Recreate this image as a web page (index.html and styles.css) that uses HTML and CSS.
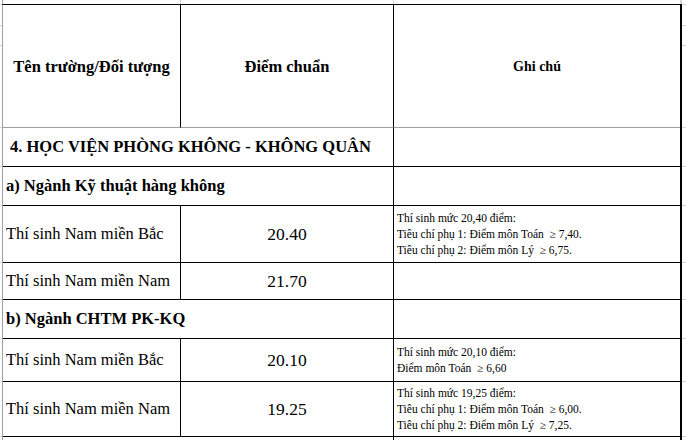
FILE: index.html
```html
<!DOCTYPE html>
<html lang="vi">
<head>
<meta charset="utf-8">
<title>Điểm chuẩn</title>
<link rel="stylesheet" href="styles.css">
</head>
<body>
<div class="sheet">
  <div class="gutter gutter-left">
    <div class="tick h5"></div><div class="tick h21"></div><div class="tick h20"></div><div class="tick h82"></div>
    <div class="tick h39"></div><div class="tick h39"></div><div class="tick h57"></div><div class="tick h37"></div>
    <div class="tick h39"></div><div class="tick h43"></div><div class="tick h55"></div>
  </div>
  <div class="main">
    <div class="topstrip"><div class="strip-cell"></div><div class="strip-cell"></div><div class="strip-cell last"></div></div>
    <div class="grid">
      <div class="cell head">Tên trường/Đối tượng</div>
      <div class="cell head">Điểm chuẩn</div>
      <div class="cell head small last">Ghi chú</div>

      <div class="cell bold span2 indent">4. HỌC VIỆN PHÒNG KHÔNG - KHÔNG QUÂN</div>
      <div class="cell last"></div>

      <div class="cell bold span2">a) Ngành Kỹ thuật hàng không</div>
      <div class="cell last"></div>

      <div class="cell">Thí sinh Nam miền Bắc</div>
      <div class="cell num">20.40</div>
      <div class="cell note last"><span>Thí sinh mức 20,40 điểm:</span><span>Tiêu chí phụ 1: Điểm môn Toán &nbsp;≥ 7,40.</span><span>Tiêu chí phụ 2: Điểm môn Lý &nbsp;≥ 6,75.</span></div>

      <div class="cell">Thí sinh Nam miền Nam</div>
      <div class="cell num">21.70</div>
      <div class="cell last"></div>

      <div class="cell bold span2">b) Ngành CHTM PK-KQ</div>
      <div class="cell last"></div>

      <div class="cell">Thí sinh Nam miền Bắc</div>
      <div class="cell num">20.10</div>
      <div class="cell note last"><span>Thí sinh mức 20,10 điểm:</span><span>Điểm môn Toán &nbsp;≥ 6,60</span></div>

      <div class="cell">Thí sinh Nam miền Nam</div>
      <div class="cell num">19.25</div>
      <div class="cell note last"><span>Thí sinh mức 19,25 điểm:</span><span>Tiêu chí phụ 1: Điểm môn Toán &nbsp;≥ 6,00.</span><span>Tiêu chí phụ 2: Điểm môn Lý &nbsp;≥ 7,25.</span></div>

      <div class="cell span2 open"></div>
      <div class="cell last open"></div>
    </div>
  </div>
  <div class="gutter gutter-right">
    <div class="tick h5"></div><div class="tick h21"></div><div class="tick h20"></div><div class="tick h82"></div>
    <div class="tick h39"></div><div class="tick h39"></div><div class="tick h57"></div><div class="tick h37"></div>
    <div class="tick h39"></div><div class="tick h43"></div><div class="tick h55"></div>
  </div>
</div>
</body>
</html>
```
FILE: styles.css
```css
html, body {
  margin: 0;
  padding: 0;
  background: #ffffff;
}
body {
  font-family: "Liberation Serif", "Times New Roman", serif;
  color: #000000;
}
.sheet {
  display: flex;
  align-items: flex-start;
  width: 686px;
  height: 440px;
  overflow: hidden;
}
.gutter {
  display: flex;
  flex-direction: column;
  flex: none;
}
.gutter-left { width: 2px; }
.gutter-right { width: 4px; }
.tick {
  box-sizing: border-box;
  border-bottom: 1px solid #d4d4d4;
  flex: none;
}
.h5 { height: 5px; }
.h20 { height: 20px; }
.h21 { height: 21px; }
.h37 { height: 37px; }
.h39 { height: 39px; }
.h43 { height: 43px; }
.h55 { height: 55px; }
.h57 { height: 57px; }
.h82 { height: 82px; }

.main {
  width: 680px;
  flex: none;
  display: flex;
  flex-direction: column;
}
.topstrip {
  flex: none;
  height: 4px;
  display: grid;
  grid-template-columns: 178px 213px 286px;
  border-left: 1px solid #a0a0a0;
  border-right: 2px solid #d4d4d4;
}
.strip-cell {
  border-right: 1px solid #d4d4d4;
}
.strip-cell.last { border-right: none; }

.grid {
  flex: none;
  display: grid;
  grid-template-columns: 178px 213px 286px;
  grid-template-rows: 123px 39px 39px 57px 37px 39px 43px 55px 30px;
  border-top: 1px solid #000000;
  border-left: 1px solid #a0a0a0;
  border-right: 2px solid #000000;
}
.cell {
  box-sizing: border-box;
  border-right: 1px solid #000000;
  border-bottom: 1px solid #000000;
  display: flex;
  align-items: center;
  padding: 0 3px;
  font-size: 16.5px;
  white-space: nowrap;
  overflow: hidden;
}
.cell.last { border-right: none; }
.cell.span2 { grid-column: span 2; }
.cell.open { border-bottom: none; }
.head {
  justify-content: center;
  font-weight: bold;
  border-bottom-color: #a0a0a0;
  padding-top: 2px;
}
.head.small { font-size: 14px; }
.bold { font-weight: bold; }
.indent { padding-left: 7px; }
.num {
  justify-content: center;
  font-size: 17.5px;
}
.note {
  flex-direction: column;
  align-items: flex-start;
  justify-content: center;
  font-size: 11.5px;
  line-height: 16px;
}
```
